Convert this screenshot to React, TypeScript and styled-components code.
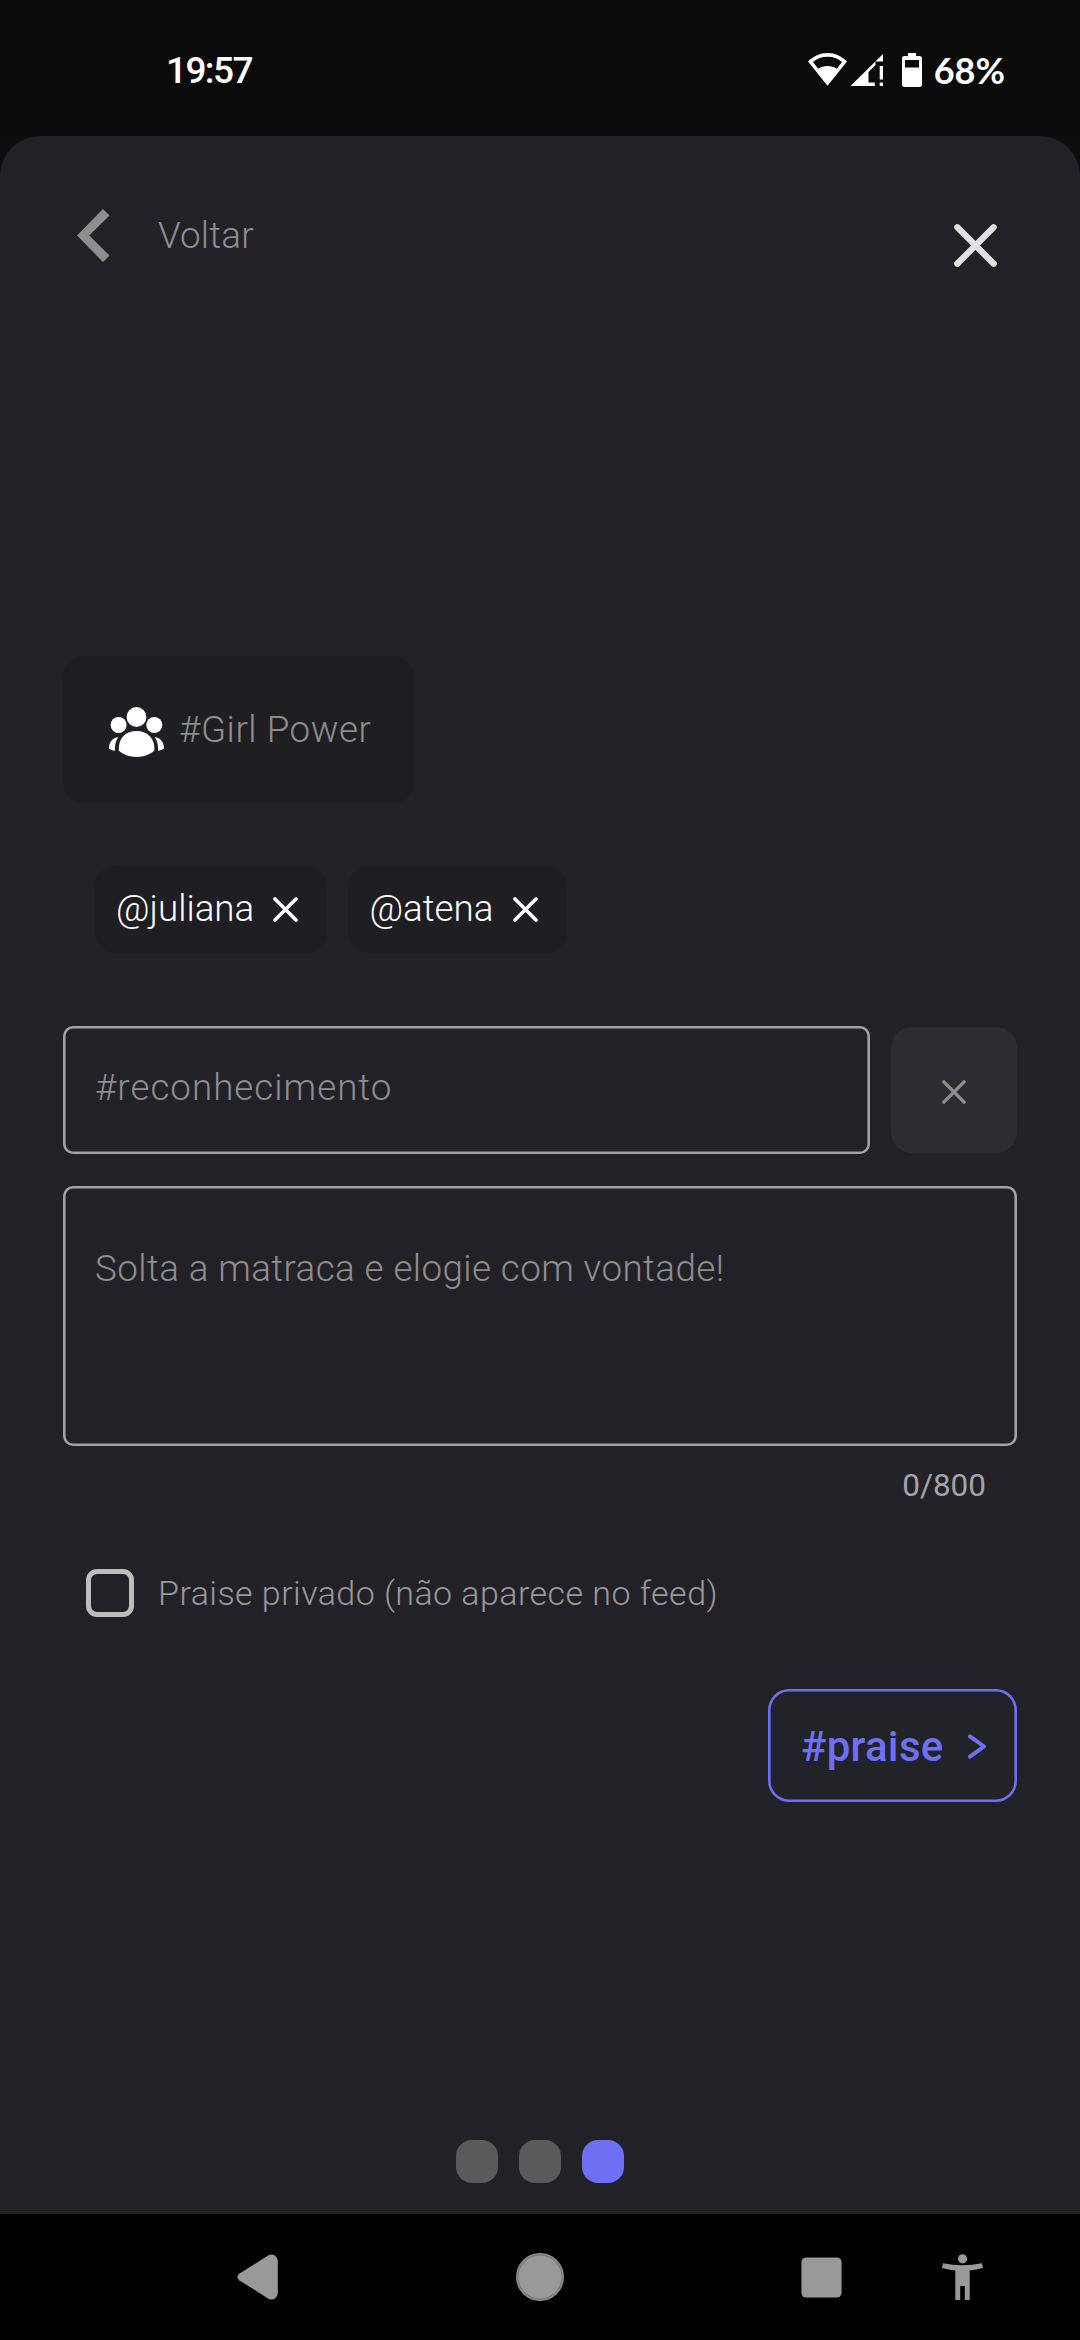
import React from "react";
import styled, { createGlobalStyle } from "styled-components";

const Global = createGlobalStyle`
  * { box-sizing: border-box; }
  body { margin: 0; background: #0d0d10; }
  button, input, textarea { font: inherit; margin: 0; }
`;

const Screen = styled.div`
  width: 1080px;
  height: 2340px;
  display: flex;
  flex-direction: column;
  background: #0d0d10;
  font-family: Roboto, "Liberation Sans", sans-serif;
  overflow: hidden;
`;

const StatusBar = styled.header`
  height: 136px;
  flex: none;
  display: flex;
  align-items: flex-start;
  justify-content: space-between;
  padding: 46px 75px 0 166px;
  background: #0b0b0b;
  color: #fff;
`;

const StatusGroup = styled.div`
  display: flex;
  align-items: flex-start;
  height: 48px;
`;

const StatusText = styled.span`
  font-family: Lato, sans-serif;
  font-size: 36px;
  line-height: 48px;
  font-weight: 700;
  white-space: nowrap;
`;

const Clock = styled(StatusText)`
  margin-top: 1px;
  font-family: Roboto, sans-serif;
  font-size: 37px;
  font-weight: 500;
  letter-spacing: -1.6px;
`;

const StatusIcons = styled.svg`
  display: block;
  margin: 4px 10px 0 0;
`;

const Sheet = styled.main`
  flex: 1;
  display: flex;
  flex-direction: column;
  background: #222127;
  border-radius: 40px 40px 0 0;
  padding: 0 63px 31px;
`;

const Header = styled.div`
  height: 520px;
  flex: none;
  display: flex;
  justify-content: space-between;
  align-items: flex-start;
  padding: 73px 20px 0 14px;
`;

const PlainButton = styled.button`
  border: 0;
  padding: 0;
  background: none;
  color: inherit;
  display: flex;
  align-items: center;
`;

const BackButton = styled(PlainButton)`
  height: 53px;
  gap: 48px;
`;

const CloseButton = styled(PlainButton)`
  margin-top: 15px;
`;

const Label = styled.span<{ $spacing?: number; $color?: string; $size?: number; $weight?: number }>`
  font-size: ${(p) => p.$size ?? 36.75}px;
  font-weight: ${(p) => p.$weight ?? 300};
  line-height: 44px;
  letter-spacing: ${(p) => p.$spacing ?? 0}px;
  color: ${(p) => p.$color ?? "#8e8e8e"};
  white-space: nowrap;
`;

const GroupCard = styled.div`
  width: 351px;
  height: 147px;
  flex: none;
  display: flex;
  align-items: center;
  gap: 15px;
  padding: 0 0 0 46px;
  border-radius: 21px;
  background: #1f1e22;
`;

const PeopleIcon = styled.svg`
  display: block;
  margin-top: 5px;
`;

const Mentions = styled.div`
  display: flex;
  gap: 21px;
  margin: 63px 0 0 31.5px;
  flex: none;
`;

const Chip = styled.div<{ $width: number }>`
  width: ${(p) => p.$width}px;
  height: 87px;
  display: flex;
  align-items: center;
  justify-content: space-between;
  padding: 0 29.5px 0 21.5px;
  border-radius: 21px;
  background: #1f1e22;
`;

const ChipLabel = styled(Label)`
  margin-bottom: 2px;
`;

const FieldRow = styled.div`
  display: flex;
  align-items: center;
  gap: 21px;
  margin-top: 73px;
  flex: none;
`;

const Field = styled.div<{ $height: number; $top: number }>`
  flex: 1;
  height: ${(p) => p.$height}px;
  padding: ${(p) => p.$top}px 32px 0;
  box-shadow: inset 0 0 0 2.6px #a3a2a6;
  border-radius: 10px;
  display: flex;
  align-items: flex-start;
`;

const ClearButton = styled(PlainButton)`
  width: 126px;
  height: 126px;
  justify-content: center;
  padding-top: 4px;
  border-radius: 21px;
  background: #2d2c32;
`;

const MessageRow = styled.div`
  display: flex;
  margin-top: 32px;
  flex: none;
`;

const Counter = styled.div`
  display: flex;
  justify-content: flex-end;
  padding: 18px 31px 0 0;
  height: 123px;
  flex: none;
`;

const CheckRow = styled.label`
  display: flex;
  align-items: center;
  gap: 24px;
  height: 48px;
  padding-left: 23px;
  flex: none;
`;

const CheckBox = styled.span`
  width: 48px;
  height: 48px;
  border: 5px solid #bdbcbf;
  border-radius: 11px;
`;

const Actions = styled.div`
  display: flex;
  justify-content: flex-end;
  margin-top: 72px;
  flex: none;
`;

const PraiseButton = styled(PlainButton)`
  width: 249px;
  height: 113px;
  justify-content: space-between;
  padding: 2px 31px 0 33px;
  box-shadow: inset 0 0 0 2.6px #6d70f3;
  border-radius: 21px;
  background: #222328;
  color: #6d70f3;
`;

const Pager = styled.div`
  display: flex;
  justify-content: center;
  gap: 21px;
  margin-top: auto;
`;

const Dot = styled.span<{ $active?: boolean }>`
  width: 42px;
  height: 43px;
  border-radius: 16px;
  background: ${(p) => (p.$active ? "#6d70f3" : "#5a5a5b")};
`;

const NavBar = styled.nav`
  height: 126px;
  flex: none;
  display: flex;
  align-items: center;
  padding: 0 97px 0 237px;
  background: #000;
  color: #999;
`;

const NavItem = styled(PlainButton)<{ $gap: number }>`
  margin-right: ${(p) => p.$gap}px;
  flex: none;
`;

function Cross({ size, stroke, color }: { size: number; stroke: number; color: string }) {
  const a = stroke / 2 + 0.2;
  const b = size - a;
  return (
    <svg width={size} height={size} viewBox={`0 0 ${size} ${size}`} fill="none" stroke={color} strokeWidth={stroke} strokeLinecap="round">
      <path d={`M${a} ${a}L${b} ${b}M${b} ${a}L${a} ${b}`} />
    </svg>
  );
}

function People() {
  return (
    <PeopleIcon width="55" height="50" viewBox="0 0 55 50" fill="#fff">
      <circle cx="27.5" cy="10" r="9.9" />
      <circle cx="9.6" cy="18" r="8" />
      <circle cx="45.3" cy="18" r="8" />
      <path d="M9.8 43.6C9 30.5 17 24 27.5 24s18.700 6.500 17.900 19.600C41 47.800 34.800 50 27.500 50S14.200 47.800 9.800 43.600Z" />
      <path d="M9.300 30C3.500 31 0 35 0 41.500 1.500 42.800 3.600 43.400 5.900 43.700 5.800 38 6.600 34 9.300 30Z" />
      <path d="M45.700 30C51.500 31 55 35 55 41.500 53.500 42.800 51.400 43.400 49.100 43.700 49.200 38 48.400 34 45.700 30Z" />
    </PeopleIcon>
  );
}

function StatusGlyphs() {
  return (
    <StatusIcons width="116" height="40" viewBox="808 50 116 40" fill="#fff">
      <path fillRule="evenodd" d="M827.500 53C820 53 813.500 56.200 808 61.500L827.500 85.700 847 61.500C841.500 56.200 835 53 827.500 53ZM827.500 56.800C833.300 56.800 838 58.700 842 62L836.800 68.700C834 66.900 831 66 827.500 66S821 66.900 818.200 68.700L813 62C817 58.700 821.700 56.800 827.500 56.800Z" />
      <path d="M883 54V61.500H875.500V65L868.500 72V82.500H874.800V86H850.500Z" />
      <path d="M879.700 66H883V79.500H879.700ZM879.700 82.600H883V86H879.700Z" />
      <path fillRule="evenodd" d="M908 53H916V56H920Q922 56 922 58.500V84.500Q922 87 919.500 87H904.500Q902 87 902 84.500V58.500Q902 56 904.500 56H908ZM905 60V67.500H919V60Z" />
    </StatusIcons>
  );
}

export default function App() {
  return (
    <>
      <Global />
      <Screen>
        <StatusBar>
          <Clock>19:57</Clock>
          <StatusGroup>
            <StatusGlyphs />
            <StatusText>68%</StatusText>
          </StatusGroup>
        </StatusBar>

        <Sheet>
          <Header>
            <BackButton>
              <svg width="33" height="53" viewBox="0 0 33 53" fill="#8e8e8e">
                <path d="M26 0L32.500 6.500 12.300 26.500 32.500 46.500 26 53 0 26.500Z" />
              </svg>
              <Label $spacing={0.2}>Voltar</Label>
            </BackButton>
            <CloseButton aria-label="Fechar">
              <Cross size={43} stroke={6.3} color="#e1e1e1" />
            </CloseButton>
          </Header>

          <GroupCard>
            <People />
            <Label $spacing={0.55}>#Girl Power</Label>
          </GroupCard>

          <Mentions>
            <Chip $width={232.5}>
              <ChipLabel $color="#fff">@juliana</ChipLabel>
              <Cross size={25} stroke={3.6} color="#fff" />
            </Chip>
            <Chip $width={219}>
              <ChipLabel $color="#fff">@atena</ChipLabel>
              <Cross size={25} stroke={3.6} color="#fff" />
            </Chip>
          </Mentions>

          <FieldRow>
            <Field $height={128} $top={40}>
              <Label $spacing={1}>#reconhecimento</Label>
            </Field>
            <ClearButton aria-label="Limpar">
              <Cross size={24} stroke={3.4} color="#8e8e8e" />
            </ClearButton>
          </FieldRow>

          <MessageRow>
            <Field $height={260} $top={61}>
              <Label $spacing={0.42}>Solta a matraca e elogie com vontade!</Label>
            </Field>
          </MessageRow>
          <Counter>
            <Label $size={31.5} $weight={400} $color="#a4a4a6">0/800</Label>
          </Counter>

          <CheckRow>
            <CheckBox />
            <Label $spacing={0.45} $size={34} $color="#9a999c">Praise privado (não aparece no feed)</Label>
          </CheckRow>

          <Actions>
            <PraiseButton>
              <Label $spacing={0.3} $size={42} $weight={500} $color="#6d70f3">#praise</Label>
              <svg width="18" height="25" viewBox="0 0 18 25" fill="none" stroke="currentColor" strokeWidth="4" strokeLinecap="round" strokeLinejoin="round">
                <path d="M2 2.300L16 12.500 2 22.700" />
              </svg>
            </PraiseButton>
          </Actions>

          <Pager>
            <Dot />
            <Dot />
            <Dot $active />
          </Pager>
        </Sheet>

        <NavBar>
          <NavItem $gap={238} aria-label="Voltar">
            <svg width="41" height="46" viewBox="0 0 41 46" fill="#999">
              <path d="M2.200 19.800L31.500 1.300Q35 -.6 38 1.500 40.800 3.500 40.800 7V39Q40.800 42.500 38 44.500 35 46.600 31.500 44.700L2.200 26.200Q-1.400 23 2.200 19.800Z" />
            </svg>
          </NavItem>
          <NavItem $gap={237} aria-label="Início">
            <svg width="48" height="48" viewBox="0 0 48 48">
              <circle cx="24" cy="24" r="24" fill="#8b8b8b" />
              <circle cx="24" cy="24" r="22" fill="#999" stroke="#6b6b6b" strokeWidth=".8" />
            </svg>
          </NavItem>
          <NavItem $gap={100} aria-label="Recentes">
            <svg width="41" height="41" viewBox="0 0 41 41"><rect x=".4" y=".4" width="40.200" height="40.200" rx="5" fill="#999" /></svg>
          </NavItem>
          <NavItem $gap={0} aria-label="Acessibilidade">
            <svg width="41" height="46" viewBox="0 0 41 46" fill="#999">
              <circle cx="20.500" cy="4.800" r="4.600" />
              <path d="M1 9.300Q20.500 13.300 40 9.300L41 14Q34.500 15.800 27.700 16.500V46H22.800V32H18.200V46H13.300V16.500Q6.500 15.800 0 14Z" />
            </svg>
          </NavItem>
        </NavBar>
      </Screen>
    </>
  );
}
